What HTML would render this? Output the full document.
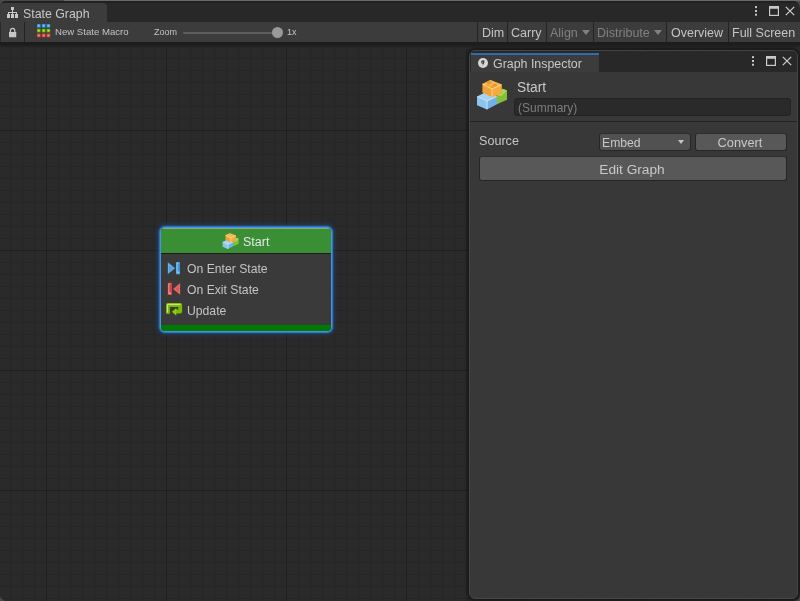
<!DOCTYPE html>
<html><head><meta charset="utf-8">
<style>
*{margin:0;padding:0;box-sizing:border-box}
html,body{width:800px;height:601px;overflow:hidden;background:#484848}
body{font-family:"Liberation Sans",sans-serif;position:relative;color:#c4c4c4;-webkit-font-smoothing:antialiased}
.a{position:absolute}
.t{white-space:nowrap;will-change:transform}
#win{left:0;top:1px;width:800px;height:600px;background:#282828;border-radius:6px 7px 7px 7px;overflow:hidden}
#canvas{left:0;top:42px;width:800px;height:559px;background-color:#2a2a2a;border-radius:0 0 7px 7px;
 background-image:
  linear-gradient(to right,#202020 1px,transparent 1px),
  linear-gradient(to bottom,#202020 1px,transparent 1px),
  linear-gradient(to right,#262626 1px,transparent 1px),
  linear-gradient(to bottom,#262626 1px,transparent 1px);
 background-size:120px 120px,120px 120px,12px 12px,12px 12px;
 background-position:46px -32px,46px -32px,10px -32px,10px -32px;
}
#tb{left:0;top:22px;width:800px;height:20px;background:#3c3c3c}
.btn{top:0.5px;height:20px;font-size:12.5px;line-height:21.5px;color:#c4c4c4}
.dis{color:#808080}
.sep{top:0;width:1px;height:20px;background:#232323}
.arr{display:inline-block;width:0;height:0;border-left:4px solid transparent;border-right:4px solid transparent;border-top:5px solid currentColor;vertical-align:2px;margin-left:4px}
#insp{left:469px;top:50px;width:329px;height:549px;background:#383838;border:1px solid #464646;border-radius:6px;box-shadow:0 0 3px 2px rgba(0,0,0,.45);overflow:hidden}
.node{left:161px;top:228px;width:170px;height:103px;border-radius:4px;background:#3a3a3a;box-shadow:0 0 0 1px #4494e4,0 0 1.5px 2px rgba(56,134,216,.9),0 0 5px 3px rgba(25,95,180,.5);overflow:hidden}
</style></head><body>
<div class="a" style="left:64px;top:0;width:736px;height:1px;background:#6c6864"></div>
<div id="win" class="a">
  <div class="a" style="left:0;top:0;width:800px;height:1.5px;background:#212121"></div>
  <div class="a" style="left:0;top:2px;width:107px;height:20px;background:#3c3c3c;border-radius:4px 4px 0 0"></div>
  <!-- hierarchy icon -->
  <svg class="a" style="left:7px;top:6px" width="11" height="11" viewBox="0 0 11 11">
    <rect x="4" y="0" width="3" height="3" fill="#c8c8c8"/>
    <rect x="5" y="3" width="1" height="2" fill="#c8c8c8"/>
    <rect x="1" y="5" width="9" height="1" fill="#c8c8c8"/>
    <rect x="1" y="5" width="1" height="2" fill="#c8c8c8"/>
    <rect x="5" y="5" width="1" height="2" fill="#c8c8c8"/>
    <rect x="9" y="5" width="1" height="2" fill="#c8c8c8"/>
    <rect x="0" y="7" width="3" height="4" fill="#c8c8c8"/>
    <rect x="4" y="7" width="3" height="4" fill="#c8c8c8"/>
    <rect x="8" y="7" width="3" height="4" fill="#c8c8c8"/>
  </svg>
  <div class="a t" style="left:23px;top:3px;height:20px;line-height:21px;font-size:12.35px;color:#c8c8c8">State Graph</div>
  <!-- window controls -->
  <svg class="a" style="left:755px;top:5px" width="41" height="11" viewBox="0 0 41 11">
    <rect x="0" y="0.1" width="2" height="2" fill="#c8c8c8"/><rect x="0" y="4" width="2" height="2" fill="#c8c8c8"/><rect x="0" y="7.7" width="2" height="2" fill="#c8c8c8"/>
    <rect x="14.6" y="0.6" width="8.8" height="8.8" fill="none" stroke="#c8c8c8" stroke-width="1.2"/><rect x="14" y="0" width="10" height="2.8" fill="#c8c8c8"/>
    <path d="M30.8 0.9 L39.2 9.1 M39.2 0.9 L30.8 9.1" stroke="#c8c8c8" stroke-width="1.3"/>
  </svg>
</div>
<div id="canvas" class="a"></div>
<div class="a" style="left:0;top:42px;width:800px;height:6px;background:linear-gradient(#1c1c1c 0,#1d1d1d 3px,#222 4px,rgba(34,34,34,0) 6px)"></div>
<div id="tb" class="a">
  <div class="a" style="left:0;top:0;width:1px;height:20px;background:#2a2a2a"></div>
  <!-- lock -->
  <svg class="a" style="left:9px;top:5px" width="8" height="11" viewBox="0 0 8 11">
    <path d="M1.45 5.2 V3.6 A2.15 2.15 0 0 1 5.75 3.6 V5.2" fill="none" stroke="#c8c8c8" stroke-width="1.2"/>
    <rect x="0" y="5" width="7.25" height="5.25" fill="#c8c8c8"/>
  </svg>
  <div class="a sep" style="left:24px"></div>
  <!-- 3x3 icon -->
  <svg class="a" style="left:36.8px;top:2px" width="14" height="14" viewBox="0 0 14 14">
    <defs>
      <radialGradient id="gb"><stop offset="0" stop-color="#8fd0f4"/><stop offset="1" stop-color="#2a8ad4"/></radialGradient>
      <radialGradient id="gg"><stop offset="0" stop-color="#c8e848"/><stop offset="1" stop-color="#58a800"/></radialGradient>
      <radialGradient id="gr"><stop offset="0" stop-color="#f49070"/><stop offset="1" stop-color="#dc4030"/></radialGradient>
    </defs>
    <rect x="0" y="0" width="3.6" height="3.6" fill="url(#gb)"/><rect x="4.9" y="0" width="3.6" height="3.6" fill="url(#gb)"/><rect x="9.6" y="0" width="3.6" height="3.6" fill="url(#gb)"/><rect x="0" y="4.8" width="3.6" height="3.6" fill="url(#gg)"/><rect x="4.9" y="4.8" width="3.6" height="3.6" fill="url(#gg)"/><rect x="9.6" y="4.8" width="3.6" height="3.6" fill="url(#gg)"/><rect x="0" y="9.6" width="3.6" height="3.6" fill="url(#gr)"/><rect x="4.9" y="9.6" width="3.6" height="3.6" fill="url(#gr)"/><rect x="9.6" y="9.6" width="3.6" height="3.6" fill="url(#gr)"/>
  </svg>
  <div class="a t" style="left:55px;top:0;line-height:20px;font-size:9.6px;color:#c4c4c4">New State Macro</div>
  <div class="a t" style="left:154px;top:0;line-height:20px;font-size:9px;color:#c4c4c4">Zoom</div>
  <div class="a" style="left:183px;top:10px;width:94px;height:2px;background:#5e5e5e;border-radius:1px"></div>
  <div class="a" style="left:272px;top:5px;width:11px;height:11px;background:#999;border-radius:50%"></div>
  <div class="a t" style="left:287px;top:0;line-height:20px;font-size:9px;color:#c4c4c4">1x</div>

  <div class="a sep" style="left:477px"></div>
  <div class="a btn t" style="left:482px">Dim</div>
  <div class="a sep" style="left:507px"></div>
  <div class="a btn t" style="left:511px">Carry</div>
  <div class="a sep" style="left:546px"></div>
  <div class="a btn t dis" style="left:550px">Align<span class="arr"></span></div>
  <div class="a sep" style="left:593px"></div>
  <div class="a btn t dis" style="left:597px">Distribute<span class="arr"></span></div>
  <div class="a sep" style="left:666px"></div>
  <div class="a btn t" style="left:671px">Overview</div>
  <div class="a sep" style="left:728px"></div>
  <div class="a btn t" style="left:732px">Full Screen</div>
</div>

<!-- node -->
<div class="a node">
  <div class="a" style="left:0;top:0;width:170px;height:26px;background:#3a8f35;border-bottom:1px solid #1c1c1c"></div>
  <div class="a" style="left:2px;top:0;width:166px;height:1px;background:#86a883"></div>
  <svg class="a" style="left:60.3px;top:2.7px" width="19.3" height="19.3" viewBox="0 0 36 36">
    <polygon points="23,19.5 28.6,12.8 33,14.6 33,23.7 23,28.3" fill="#84c036"/>
    <polygon points="23,19.5 28.6,12.8 33,14.6 27.5,20" fill="#a6d65c"/>
    <polygon points="3,20.5 13,25 13,33.5 3,29.3" fill="#8cc4f0"/>
    <polygon points="13,25 23,20.5 23,28.2 13,33.5" fill="#6fb1e8"/>
    <polygon points="3,20.5 12,16 23,20.5 13,25" fill="#a4d2f6"/>
    <path d="M3.3 20.6 L13 25 L22.8 20.6 M13 25 V33.3" stroke="#e4f2fc" stroke-width="1.2" fill="none"/>
    <polygon points="8.4,8 16.4,4 27.6,8.4 27.6,17.4 18,21.2 8.4,16.6" fill="#f0a232"/>
    <polygon points="18,13 27.6,8.4 27.6,17.4 18,21.2" fill="#f6ab3c"/>
    <polygon points="8.4,8 16.4,4 27.6,8.4 18,13" fill="#f6b855"/>
    <path d="M8.6 8.1 L18 13 L27.4 8.5 M18 13 V21" stroke="#fde0b0" stroke-width="1.2" fill="none"/>
  </svg>
  <div class="a t" style="left:82px;top:0;line-height:28px;font-size:12.5px;color:#e6e6e6">Start</div>
  <div class="a" style="left:0;bottom:0;width:170px;height:6px;background:#027a02"></div>
  <svg class="a" style="left:5px;top:33px" width="16" height="16" viewBox="0 0 16 16">
    <polygon points="1.8,1 9.3,7.15 1.8,13.3" fill="#3f93d8"/>
    <polygon points="2.6,3 7.7,7.15 2.6,11.3" fill="#4c9fe0" stroke="#a6d4f6" stroke-width="0.7" stroke-dasharray="1.2 0.6"/>
    <rect x="10" y="1" width="4" height="12.3" fill="#3f93d8"/>
    <path d="M11 12.3 V2 H12.5" fill="none" stroke="#b0dcf8" stroke-width="0.8"/>
    <rect x="11.3" y="10.5" width="2" height="2" fill="#8ccaf4"/>
  </svg>
  <svg class="a" style="left:5px;top:54px" width="16" height="16" viewBox="0 0 16 16">
    <rect x="1.8" y="0.8" width="4.2" height="12.2" fill="#d04444"/>
    <path d="M2.8 12 V1.8 H4.3" fill="none" stroke="#f4b0b0" stroke-width="0.8"/>
    <rect x="3" y="10.3" width="2" height="2" fill="#ec8a8a"/>
    <polygon points="14.2,0.8 6.8,7 14.2,13.1" fill="#d04444"/>
    <polygon points="13.4,2.8 8.4,7 13.4,11.1" fill="#dc5656" stroke="#f2a6a6" stroke-width="0.7" stroke-dasharray="1.2 0.6"/>
  </svg>
  <svg class="a" style="left:3px;top:72px" width="20" height="20" viewBox="0 0 20 20">
    <polyline points="4,13.8 4,5 16.2,5 16.2,11.5 11.5,11.5" fill="none" stroke="#7cbc00" stroke-width="3.8" stroke-linejoin="round"/>
    <polygon points="8,11.7 12.3,8 12.3,15.7" fill="#8cd000"/>
    <polyline points="3.4,12.5 3.4,4.4 16.6,4.4" fill="none" stroke="#d4f09a" stroke-width="0.9"/>
  </svg>
  <div class="a t" style="left:26px;top:33px;font-size:12.2px;line-height:16px;color:#c4c4c4">On Enter State</div>
  <div class="a t" style="left:26px;top:54px;font-size:12.2px;line-height:16px;color:#c4c4c4">On Exit State</div>
  <div class="a t" style="left:26px;top:75px;font-size:12.2px;line-height:16px;color:#c4c4c4">Update</div>
</div>

<!-- inspector -->
<div id="insp" class="a">
  <div class="a" style="left:0;top:0;width:327px;height:21px;background:#282828"></div>
  <div class="a" style="left:1px;top:2px;width:128px;height:19px;background:#3c3c3c;border-top:2px solid #2f6cae"></div>
  <svg class="a" style="left:8px;top:7px" width="10" height="10" viewBox="0 0 10 10"><circle cx="5" cy="5" r="5" fill="#d6d6d6"/><path d="M3.2 3.2 Q4.5 1.9 6.3 2.6 Q6.9 4.6 5.6 6.2 Q4.7 7.4 3.9 7.7 Q4.9 6.6 5.1 5.7 Q3.6 6 3.2 4.5 Z M4.6 3.6 L4.2 4.8 L5.3 4.6 Z" fill="#3a3a3a"/></svg>
  <div class="a t" style="left:23px;top:5px;line-height:17px;font-size:12.4px;color:#c8c8c8">Graph Inspector</div>
  <svg class="a" style="left:281.9px;top:4.9px" width="41" height="11" viewBox="0 0 41 11">
    <rect x="0" y="0.1" width="2" height="2" fill="#c8c8c8"/><rect x="0" y="4" width="2" height="2" fill="#c8c8c8"/><rect x="0" y="7.7" width="2" height="2" fill="#c8c8c8"/>
    <rect x="14.6" y="0.6" width="8.8" height="8.8" fill="none" stroke="#c8c8c8" stroke-width="1.2"/><rect x="14" y="0" width="10" height="2.8" fill="#c8c8c8"/>
    <path d="M30.8 0.9 L39.2 9.1 M39.2 0.9 L30.8 9.1" stroke="#c8c8c8" stroke-width="1.3"/>
  </svg>
  <svg class="a" style="left:4px;top:25px" width="36" height="36" viewBox="0 0 36 36">
    <polygon points="23,19.5 28.6,12.8 33,14.6 33,23.7 23,28.3" fill="#84c036"/>
    <polygon points="23,19.5 28.6,12.8 33,14.6 27.5,20" fill="#a6d65c"/>
    <polygon points="3,20.5 13,25 13,33.5 3,29.3" fill="#8cc4f0"/>
    <polygon points="13,25 23,20.5 23,28.2 13,33.5" fill="#6fb1e8"/>
    <polygon points="3,20.5 12,16 23,20.5 13,25" fill="#a4d2f6"/>
    <path d="M3.3 20.6 L13 25 L22.8 20.6 M13 25 V33.3" stroke="#e4f2fc" stroke-width="0.8" fill="none"/>
    <polygon points="8.4,8 16.4,4 27.6,8.4 27.6,17.4 18,21.2 8.4,16.6" fill="#f0a232"/>
    <polygon points="18,13 27.6,8.4 27.6,17.4 18,21.2" fill="#f6ab3c"/>
    <polygon points="8.4,8 16.4,4 27.6,8.4 18,13" fill="#f6b855"/>
    <ellipse cx="15" cy="6.6" rx="2.6" ry="1.5" fill="#e8982a"/>
    <ellipse cx="21" cy="9.2" rx="2.6" ry="1.5" fill="#e8982a"/>
    <ellipse cx="13.5" cy="9.8" rx="2.2" ry="1.2" fill="#eda035"/>
    <ellipse cx="18.5" cy="11" rx="2.4" ry="1.3" fill="#eda035"/>
    <path d="M8.6 8.1 L18 13 L27.4 8.5 M18 13 V21" stroke="#fde0b0" stroke-width="0.8" fill="none"/>
  </svg>
  <div class="a t" style="left:47px;top:29px;line-height:16px;font-size:13.8px;color:#c8c8c8">Start</div>
  <div class="a" style="left:44px;top:47px;width:277px;height:18px;background:#2a2a2a;border-radius:3px;border:1px solid #232323"></div>
  <div class="a t" style="left:47.5px;top:48.7px;line-height:16px;font-size:12px;color:#7c7c7c">(Summary)</div>
  <div class="a" style="left:0;top:70px;width:327px;height:1px;background:#232323"></div>
  <div class="a t" style="left:9px;top:83px;line-height:14px;font-size:12.6px;color:#c4c4c4">Source</div>
  <div class="a" style="left:128.5px;top:82px;width:92px;height:18px;background:#515151;border-radius:3px;border:1px solid #262626;border-top-color:#2e2e2e"></div>
  <div class="a" style="left:207.5px;top:89px;width:0;height:0;border-left:3.5px solid transparent;border-right:3.5px solid transparent;border-top:4.5px solid #c4c4c4"></div>
  <div class="a t" style="left:132px;top:84.5px;line-height:15px;font-size:12.2px;color:#c8c8c8">Embed</div>
  <div class="a" style="left:224.5px;top:82px;width:92px;height:18px;background:#585858;border-radius:3px;border:1px solid #262626;border-top-color:#2e2e2e"></div>
  <div class="a t" style="left:223.5px;top:83.5px;width:92px;text-align:center;line-height:15px;font-size:12.8px;color:#c8c8c8">Convert</div>
  <div class="a" style="left:8.5px;top:105px;width:308px;height:25px;background:#585858;border-radius:3px;border:1px solid #262626;border-top-color:#2e2e2e"></div>
  <div class="a t" style="left:7.5px;top:105.6px;width:308px;text-align:center;line-height:25px;font-size:13.7px;color:#c8c8c8">Edit Graph</div>
</div>
</body></html>
